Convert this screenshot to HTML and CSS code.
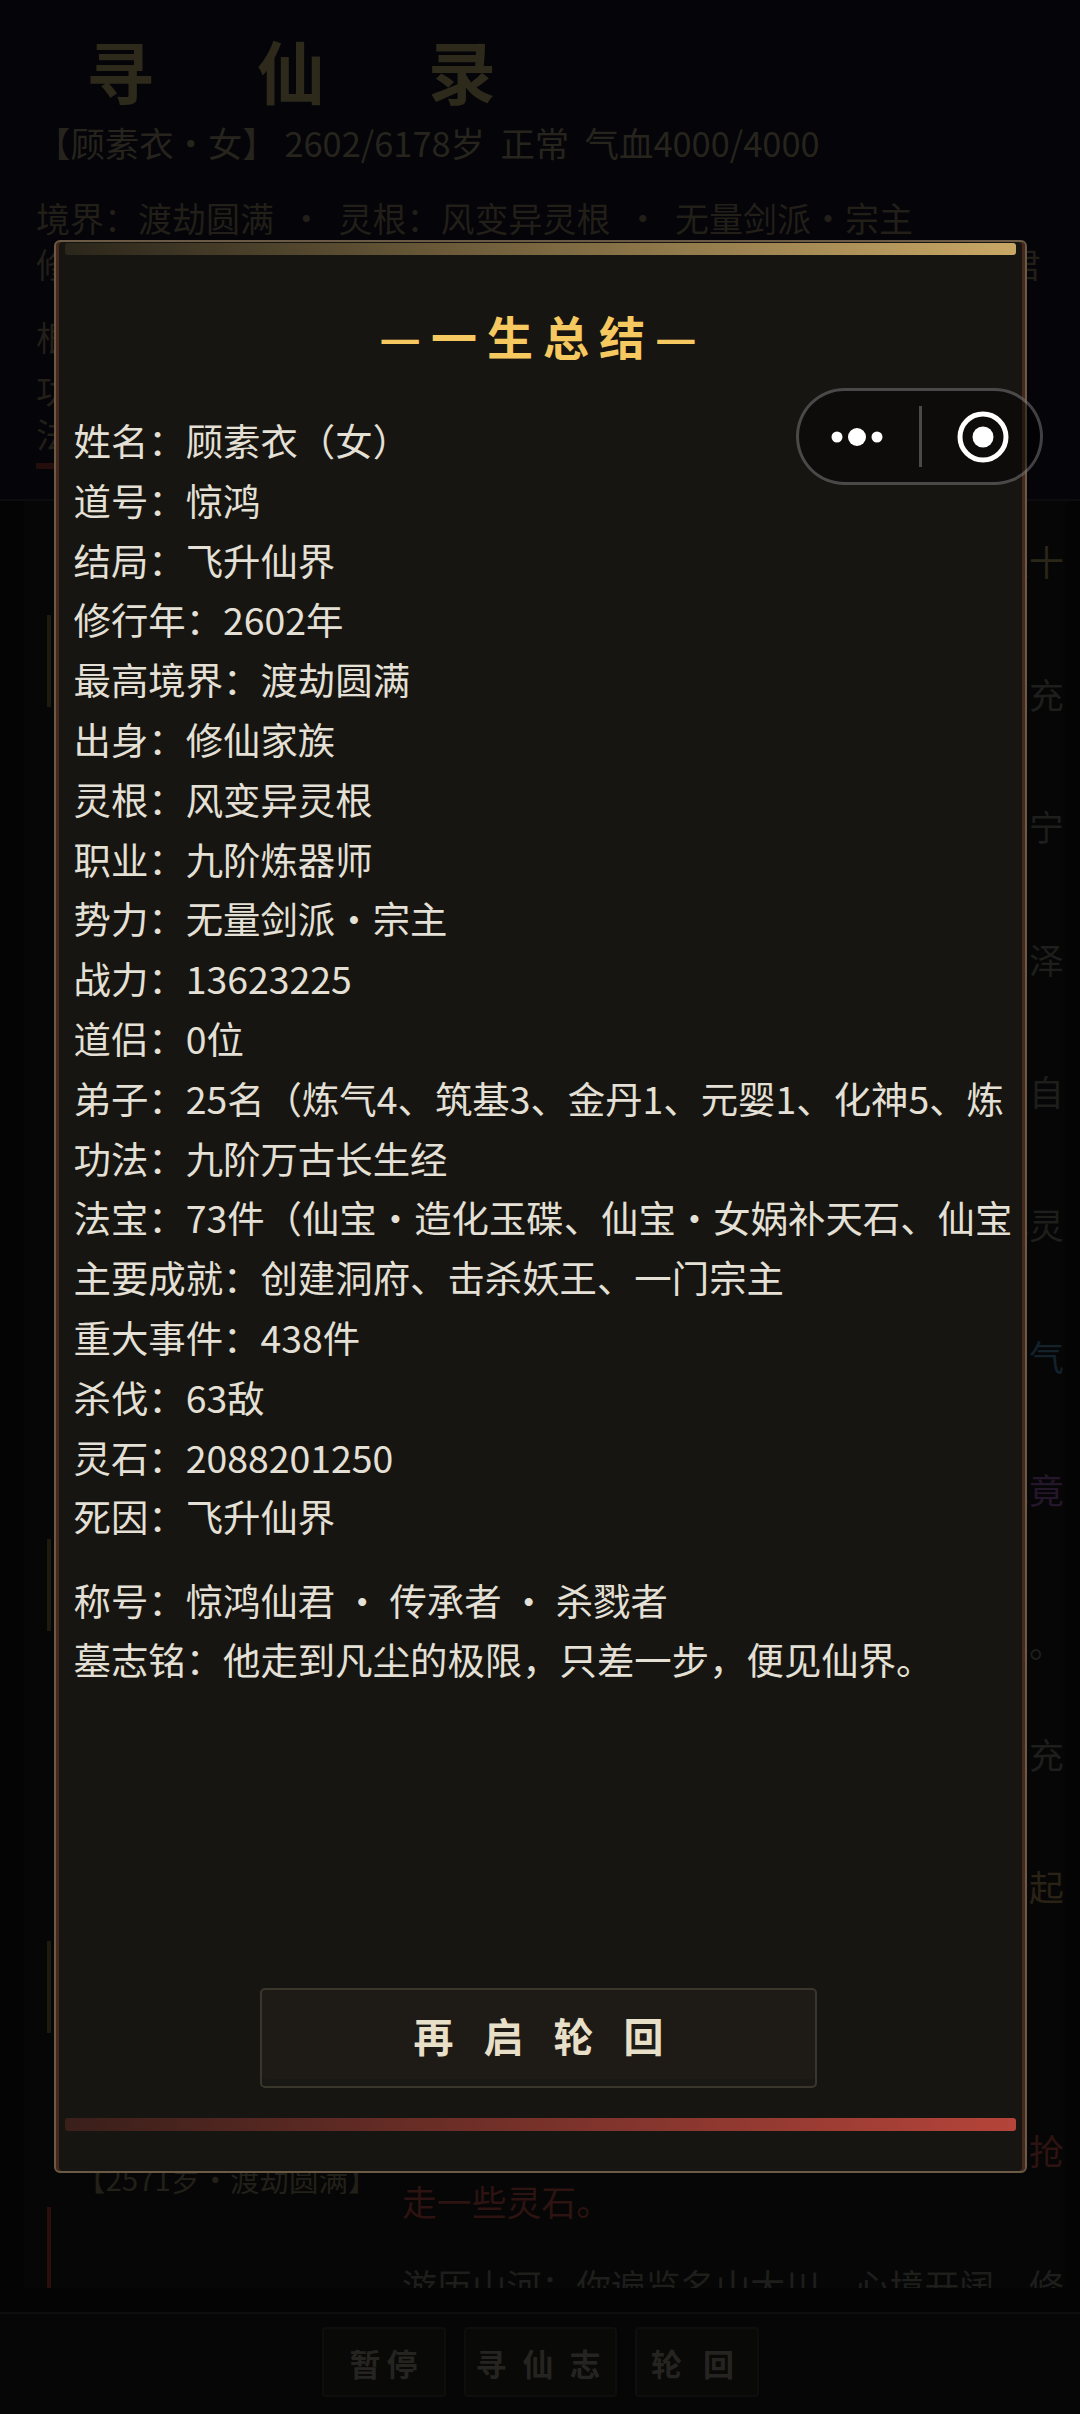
FILE: index.html
```html
<!DOCTYPE html>
<html>
<head>
    <title>寻仙录</title>
    <link rel="stylesheet" href="styles.css">
</head>
<body>
    <div class="page">
        <div class="header">
            <div class="game-title">寻仙录</div>
            <div class="stats">【顾素衣・女】 2602/6178岁&nbsp;&nbsp;正常&nbsp;&nbsp;气血4000/4000</div>
            <div class="info info-first">境界：渡劫圆满&nbsp;&nbsp;・&nbsp;&nbsp;灵根：风变异灵根&nbsp;&nbsp;・&nbsp;&nbsp;无量剑派・宗主</div>
            <div class="info info-split"><span>修为：圆满</span><span>君</span></div>
            <div class="info info-third">根骨：上佳</div>
            <div class="info info-fourth">功法：九阶万古长生经</div>
            <div class="info info-fifth">法宝：七十三件</div>
            <div class="hp-bar"></div>
        </div>

        <div class="log">
            <div class="rail">
                <div class="rail-bar gold bar-1"></div>
                <div class="rail-bar gold bar-2"></div>
                <div class="rail-bar gold bar-3"></div>
                <div class="age">【2571岁・渡劫圆满】</div>
                <div class="rail-bar red bar-4"></div>
            </div>
            <div class="lines">
                <p class="log-line gold-text">闭关修炼：你静坐洞府中，灵气运转周天十</p>
                <p class="log-line">游历山河：你遍览名山大川，道心愈发丰充</p>
                <p class="log-line">静心悟道：你于山巅观云海，心境渐渐安宁</p>
                <p class="log-line">炼器有成：你开炉炼制法宝，器成光华润泽</p>
                <p class="log-line">参悟功法：你研读上古典籍，所得皆出于自</p>
                <p class="log-line">采集灵药：你入深山采灵药，药香沁人心灵</p>
                <p class="log-line blue-text">调息养神：你吐纳天地，体内尽是清灵之气</p>
                <p class="log-line purple-text gap-l">仙缘奇遇：你途经上古遗迹，其间宝光究竟</p>
                <p class="log-line gap-s">然久久不散，你驻足良久离去，收获颇丰。</p>
                <p class="log-line">宗门事务：你处理门中诸事，弟子心中皆充</p>
                <p class="log-line amber-text gap-xl">天地异象：你正修行之时，忽有八方风云起</p>
                <p class="log-line red-text gap-0">遭遇劫修：你行至荒野，遇一伙散修前来抢</p>
                <p class="log-line red-text gap-m">走一些灵石。</p>
                <p class="log-line">游历山河：你遍览名山大川，心境开阔，修</p>
            </div>
        </div>

        <div class="footer">
            <button class="foot-btn pause">暂停</button>
            <button class="foot-btn journal">寻仙志</button>
            <button class="foot-btn rebirth">轮回</button>
        </div>
    </div>

    <div class="modal">
        <div class="bar bar-top"></div>
        <h2 class="modal-title">—一生总结—</h2>
        <div class="summary">
            <div class="row">姓名：顾素衣（女）</div>
            <div class="row">道号：惊鸿</div>
            <div class="row">结局：飞升仙界</div>
            <div class="row">修行年：2602年</div>
            <div class="row">最高境界：渡劫圆满</div>
            <div class="row">出身：修仙家族</div>
            <div class="row">灵根：风变异灵根</div>
            <div class="row">职业：九阶炼器师</div>
            <div class="row">势力：无量剑派・宗主</div>
            <div class="row">战力：13623225</div>
            <div class="row">道侣：0位</div>
            <div class="row">弟子：25名（炼气4、筑基3、金丹1、元婴1、化神5、炼虚2）</div>
            <div class="row">功法：九阶万古长生经</div>
            <div class="row">法宝：73件（仙宝・造化玉碟、仙宝・女娲补天石、仙宝昆仑镜）</div>
            <div class="row">主要成就：创建洞府、击杀妖王、一门宗主</div>
            <div class="row">重大事件：438件</div>
            <div class="row">杀伐：63敌</div>
            <div class="row">灵石：2088201250</div>
            <div class="row">死因：飞升仙界</div>
            <div class="row row-gap">称号：惊鸿仙君 ・ 传承者 ・ 杀戮者</div>
            <div class="row">墓志铭：他走到凡尘的极限，只差一步，便见仙界。</div>
        </div>
        <button class="again-btn">再启轮回</button>
        <div class="bar bar-bottom"></div>
    </div>

    <div class="capsule">
        <svg class="capsule-more" width="80" height="24" viewBox="0 0 80 24">
            <circle cx="11" cy="12" r="5.5" fill="#fff"/>
            <circle cx="31" cy="12" r="9" fill="#fff"/>
            <circle cx="51" cy="12" r="5.5" fill="#fff"/>
        </svg>
        <div class="capsule-line"></div>
        <svg class="capsule-close" width="54" height="54" viewBox="0 0 54 54">
            <circle cx="27" cy="27" r="23" fill="none" stroke="#fff" stroke-width="5"/>
            <circle cx="27" cy="27" r="10.5" fill="#fff"/>
        </svg>
    </div>
</body>
</html>
```

FILE: styles.css
```css
* {
    box-sizing: border-box;
}

body {
    margin: 0;
    background: #040404;
    font-family: "Noto Sans CJK SC", "Noto Sans", sans-serif;
}

.page {
    display: flex;
    flex-direction: column;
    width: 1080px;
    height: 2414px;
    overflow: hidden;
}

/* header behind the overlay */
.header {
    height: 501px;
    padding: 24px 36px 0;
    background: #040409;
    border-bottom: 2px solid #0c0c0e;
    overflow: hidden;
}

.game-title {
    margin-left: 50px;
    font-size: 68px;
    line-height: 92px;
    font-weight: 700;
    letter-spacing: 103px;
    color: #2d291b;
}

.stats {
    margin-top: 1px;
    font-size: 34.4px;
    line-height: 50px;
    color: #26241d;
}

.info {
    font-size: 34px;
    line-height: 50px;
    color: #211f18;
    white-space: nowrap;
}

.info-first {
    margin-top: 26px;
    margin-bottom: -4px;
}

.info-split {
    display: flex;
    justify-content: space-between;
    width: 1005px;
}

.info-third {
    margin-top: 23px;
}

.info-fourth {
    margin-top: 3px;
}

.info-fifth {
    margin-top: -6px;
}

.hp-bar {
    width: 100px;
    height: 6px;
    margin-top: 4px;
    background: #240e0c;
}

/* log behind the overlay */
.log {
    display: flex;
    height: 1787px;
    margin: 0 14px 24px 24px;
    background: #060606;
    overflow: hidden;
}

.rail {
    display: flex;
    flex-direction: column;
    flex: none;
    width: 378px;
    padding-left: 23px;
}

.rail-bar {
    flex: none;
    width: 4px;
    height: 92px;
}

.rail-bar.gold {
    background: #1d1b10;
}

.rail-bar.red {
    background: #2a0f0d;
}

.bar-1 {
    margin-top: 114px;
}

.bar-2 {
    margin-top: 832px;
}

.bar-3 {
    margin-top: 310px;
}

.bar-4 {
    margin-top: 9px;
}

.age {
    flex: none;
    margin: 125px 0 0 29px;
    font-size: 29.5px;
    line-height: 40px;
    white-space: nowrap;
    color: #222019;
}

.lines {
    flex: none;
    width: 670px;
    padding-top: 35px;
}

.log-line {
    height: 51px;
    margin: 0 0 81.5px;
    font-size: 34.85px;
    line-height: 51px;
    white-space: nowrap;
    color: #1e1e1c;
}

.gold-text {
    color: #2a2618;
}

.blue-text {
    color: #13222b;
}

.purple-text {
    color: #24162b;
}

.amber-text {
    color: #2a2214;
}

.red-text {
    color: #2d1311;
}

.gap-l {
    margin-bottom: 103px;
}

.gap-s {
    margin-bottom: 60px;
}

.gap-xl {
    margin-bottom: 213px;
}

.gap-0 {
    margin-bottom: 0;
}

.gap-m {
    margin-bottom: 33px;
}

.footer {
    display: flex;
    justify-content: center;
    flex: none;
    gap: 18px;
    height: 102px;
    padding-top: 13px;
    background: #060606;
    border-top: 2px solid #0d0d0c;
}

.foot-btn {
    height: 70px;
    padding: 0;
    background: #090908;
    border: 2px solid #0e0e0d;
    border-radius: 4px;
    font-family: inherit;
    font-size: 31px;
    font-weight: 700;
    white-space: nowrap;
    color: #262421;
}

.pause {
    width: 124px;
    padding-left: 6px;
    letter-spacing: 6px;
}

.journal {
    width: 153px;
    padding-left: 10px;
    letter-spacing: 16px;
}

.rebirth {
    width: 124px;
    padding-left: 13px;
    letter-spacing: 21px;
}

/* summary dialog */
.modal {
    position: absolute;
    left: 54px;
    top: 240px;
    display: flex;
    flex-direction: column;
    width: 973px;
    height: 1933px;
    padding: 1px 9px 0;
    background: #171512;
    border: 2px solid #6a5a46;
    border-radius: 6px;
    box-shadow: inset 3px 0 0 #46291c, inset -3px 0 0 #46291c;
}

.bar {
    flex: none;
    height: 12px;
    border-radius: 3px;
}

.bar-top {
    background: linear-gradient(to right, #2b261b, #c9a866);
}

.bar-bottom {
    height: 13px;
    margin-bottom: 40px;
    background: linear-gradient(to right, #3a1f1a, #b5443a);
}

.modal-title {
    margin: 45px 0 0;
    padding-left: 5px;
    font-size: 46px;
    line-height: 70px;
    font-weight: 700;
    letter-spacing: 10px;
    text-align: center;
    color: #f5c860;
}

.summary {
    margin: 41px 0 0 8.5px;
    width: 948px;
}

.row {
    height: 59.8px;
    overflow: hidden;
    font-size: 37.4px;
    line-height: 59.8px;
    word-break: break-all;
    color: #e4e0d6;
}

.row-gap {
    margin-top: 23.5px;
}

.again-btn {
    flex: none;
    width: 557px;
    height: 100px;
    margin: auto 0 30px 195px;
    padding: 0 0 6px 30px;
    background: #1e1b16;
    border: 2px solid #3a362c;
    border-radius: 5px;
    box-shadow: inset 0 -7px 0 #1a1814;
    font-family: inherit;
    font-size: 40px;
    font-weight: 700;
    letter-spacing: 30px;
    color: #e8dfc8;
}

/* mini program capsule */
.capsule {
    position: absolute;
    left: 796px;
    top: 388px;
    display: flex;
    align-items: center;
    width: 247px;
    height: 97px;
    padding-left: 27px;
    background: rgba(0, 0, 0, 0.4);
    border: 3px solid rgba(255, 255, 255, 0.25);
    border-radius: 49px;
}

.capsule-line {
    flex: none;
    width: 3px;
    height: 61px;
    margin-left: 12.5px;
    background: rgba(255, 255, 255, 0.25);
}

.capsule-more,
.capsule-close {
    flex: none;
}

.capsule-close {
    margin-left: 34px;
}
```
